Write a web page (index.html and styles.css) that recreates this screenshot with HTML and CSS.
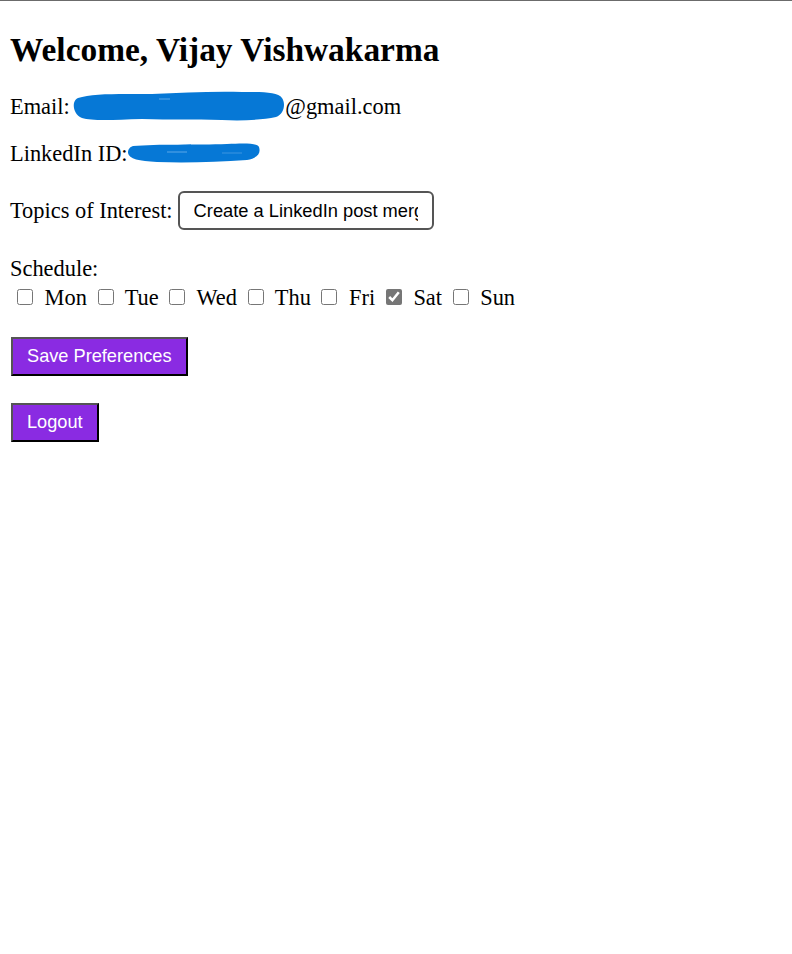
FILE: index.html
```html
<!DOCTYPE html>
<html>
<head>
<meta charset="utf-8">
<title>Dashboard</title>
<link rel="stylesheet" href="styles.css">
</head>
<body>
<div class="page">
  <h1 class="title">Welcome, Vijay Vishwakarma</h1>
  <p class="line line-email">Email: <span class="redact redact-email"><svg width="214" height="32" viewBox="0 0 214 32"><path d="M6 8 C20 3 50 4 80 4 C110 3 140 1 170 2 C190 2 206 2 210 8 C214 14 212 24 204 27 C190 30 170 31 150 30 C120 29 100 30 70 29 C40 30 20 31 10 28 C3 25 1 18 2 13 C3 10 4 9 6 8 Z" fill="#0678d6"/><path d="M87 9 L98 9" stroke="#5aa7e8" stroke-width="1"/></svg></span>@gmail.com</p>
  <p class="line line-id">LinkedIn ID:<span class="redact redact-id"><svg width="134" height="22" viewBox="0 0 134 22"><path d="M6 4 C30 2 70 3 100 2 C118 1 130 1 132 5 C134 11 131 16 120 18 C90 20 60 21 30 20 C12 19 2 17 1 11 C1 7 3 5 6 4 Z" fill="#0678d6"/><path d="M40 10 L60 10" stroke="#5aa7e8" stroke-width="1"/><path d="M95 11 L115 11" stroke="#3d95e0" stroke-width="1"/></svg></span></p>
  <div class="topics">
    <label class="topics-label" for="topics">Topics of Interest:</label>
    <input id="topics" class="topics-input" type="text" value="Create a LinkedIn post merging the latest trends">
  </div>
  <div class="schedule">
    <div class="schedule-label">Schedule:</div>
    <div class="days"><input type="checkbox" class="box"> Mon <input type="checkbox" class="box"> Tue <input type="checkbox" class="box"> Wed <input type="checkbox" class="box"> Thu <input type="checkbox" class="box"> Fri <input type="checkbox" class="box" checked> Sat <input type="checkbox" class="box"> Sun</div>
  </div>
  <div class="actions">
    <button class="btn" type="button">Save Preferences</button>
    <button class="btn" type="button">Logout</button>
  </div>
</div>
</body>
</html>
```
FILE: styles.css
```css
html {
  border-top: 1px solid #6b6b6b;
  background: #fff;
}
body {
  margin: 0;
  font-family: "Liberation Serif", "Times New Roman", serif;
  font-size: 22.4px;
  line-height: 25px;
  color: #000;
}
.page {
  padding: 0 10px;
}
.title {
  font-size: 33.4px;
  font-weight: bold;
  line-height: 37px;
  margin: 30px 0 0;
}
.line {
  margin: 26px 0 0;
}
.line-id {
  margin-top: 22px;
}
.redact {
  display: inline-block;
  position: relative;
  height: 0;
}
.redact svg {
  position: absolute;
}
.redact-email {
  width: 210px;
}
.redact-email svg {
  left: -3px;
  bottom: -8px;
}
.redact-id {
  width: 134px;
}
.redact-id svg {
  bottom: -3px;
  left: -1px;
}
.topics {
  display: flex;
  align-items: center;
  gap: 5px;
  margin-top: 25px;
}
.topics-input {
  width: 256px;
  height: 39px;
  box-sizing: border-box;
  border: 2px solid #555;
  border-radius: 6px;
  padding: 0 14px;
  margin: 0;
  font-family: "Liberation Sans", Arial, sans-serif;
  font-size: 18.3px;
  color: #000;
  outline: none;
}
.schedule {
  margin-top: 26px;
}
.days {
  margin-top: 4px;
}
.box {
  width: 16px;
  height: 16px;
  margin: 0 6px 0 5px;
  vertical-align: baseline;
  accent-color: #767676;
}
.box:first-child {
  margin-left: 7px;
}
.actions {
  display: flex;
  flex-direction: column;
  align-items: flex-start;
  gap: 27px;
  margin-top: 27px;
}
.btn {
  background: #8a2be2;
  color: #fff;
  font-family: "Liberation Sans", Arial, sans-serif;
  font-size: 18.2px;
  height: 39px;
  padding: 0 14px;
  margin: 0 0 0 1px;
  border: 2px solid;
  border-color: #555 #000 #000 #555;
}
```
